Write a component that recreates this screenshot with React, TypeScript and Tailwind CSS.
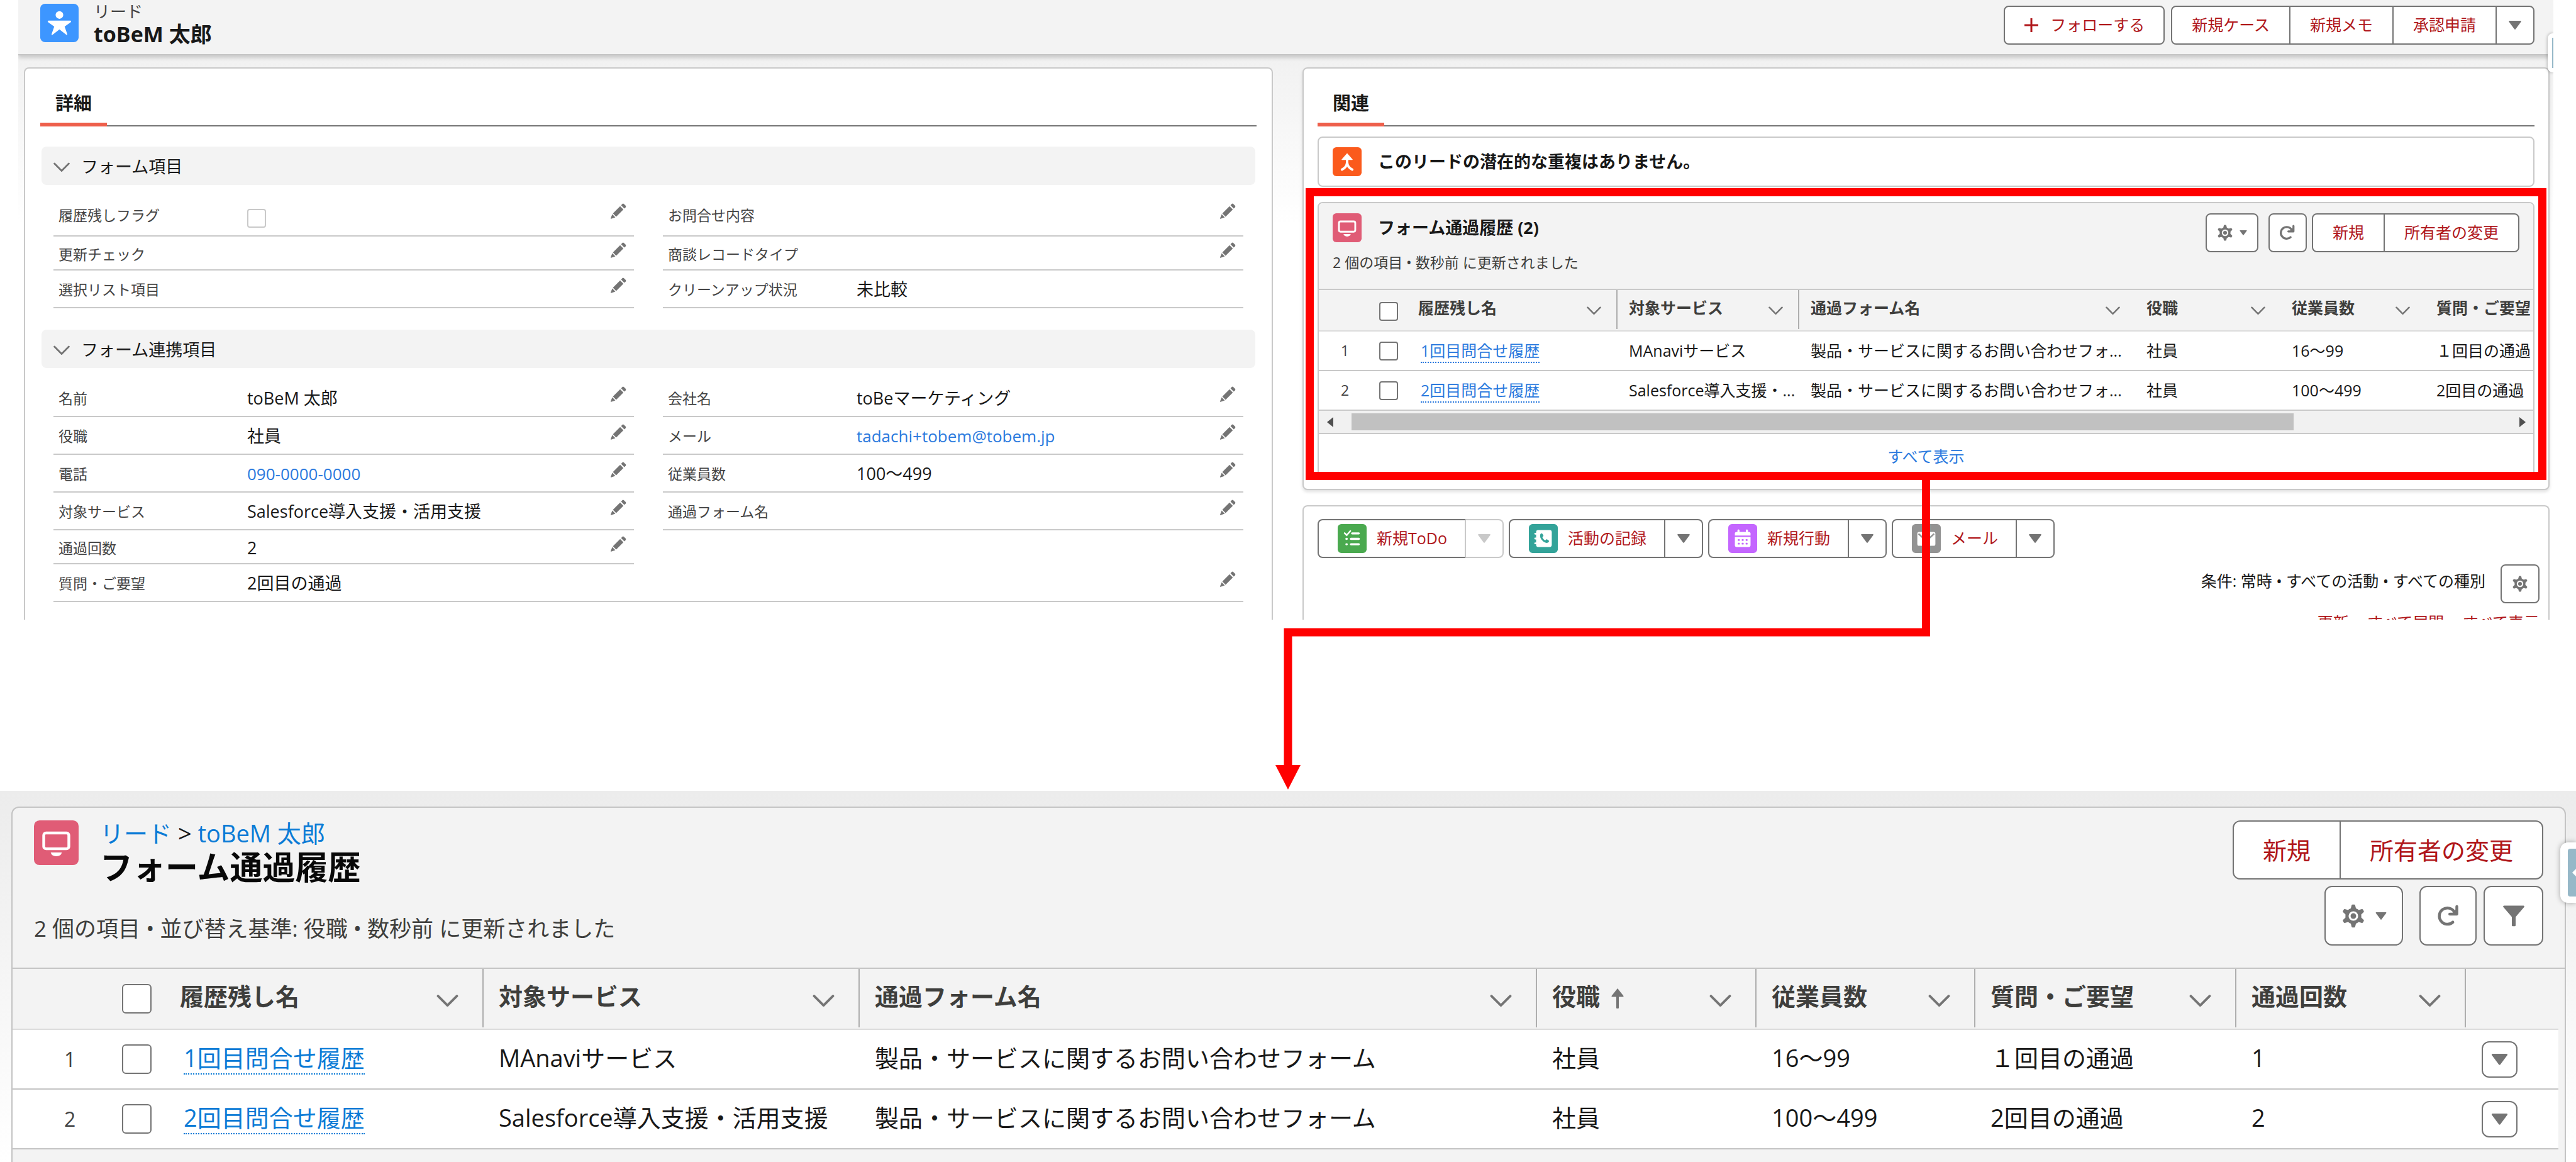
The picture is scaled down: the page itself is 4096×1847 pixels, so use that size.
import React from "react";

const GRAY = "#747474";

/* ---------- icons ---------- */

function Chevron({ className }: { className: string }) {
  return (
    <svg viewBox="0 0 24 14" className={className} fill="none" stroke={GRAY} strokeWidth="2.6" aria-hidden="true">
      <path d="M1.5 1.5 12 12 22.5 1.5" strokeLinecap="round" strokeLinejoin="round" />
    </svg>
  );
}

function Triangle({ className, color = GRAY }: { className: string; color?: string }) {
  return (
    <svg viewBox="0 0 20 14" className={className} fill={color} aria-hidden="true">
      <path d="M1.2 0h17.6q1.6.3.7 1.7L11 13.2q-1 1.2-2 0L.5 1.7Q-.4.3 1.2 0z" />
    </svg>
  );
}

function Gear({ className }: { className: string }) {
  return (
    <svg viewBox="0 0 24 24" className={className} aria-hidden="true">
      {[0, 60, 120, 180, 240, 300].map((a) => (
        <path key={a} d="M9 6 10.200 1.200q.2-.8 1-.8h1.600q.8 0 1 .8L15 6z" fill={GRAY} transform={`rotate(${a} 12 12)`} />
      ))}
      <circle cx="12" cy="12" r="6.4" fill="none" stroke={GRAY} strokeWidth="3.2" />
      <circle cx="12" cy="12" r="2.8" fill={GRAY} />
    </svg>
  );
}

function Refresh({ className }: { className: string }) {
  return (
    <svg viewBox="0 0 24 24" className={className} fill="none" stroke={GRAY} strokeWidth="3" aria-hidden="true">
      <path d="M16.8 18.5A8.600 8.600 0 1 1 18.500 7.800" strokeLinecap="round" />
      <path d="M21 2v8h-7.500" strokeLinejoin="round" strokeLinecap="round" />
      <path d="M21 4v6h-6z" fill={GRAY} stroke="none" />
    </svg>
  );
}

function Funnel({ className }: { className: string }) {
  return (
    <svg viewBox="0 0 24 24" className={className} fill={GRAY} aria-hidden="true">
      <path d="M1.600 1h20.800q1.400.4.500 1.700L14 13v9q-.1.900-1 .9h-2q-.9 0-1-.9v-9L1.100 2.700Q.2 1.400 1.600 1z" />
    </svg>
  );
}

function Pencil() {
  return (
    <svg viewBox="0 0 24 24" className="size-[26px]" fill={GRAY} aria-hidden="true">
      <path d="M4.200 15 14.800 4.400l4.800 4.800L9 19.800z" />
      <path d="m16.200 3 2-2q1-.9 2 0l2.800 2.800q.9 1 0 2l-2 2z" />
      <path d="M3.300 16.200 7.800 20.700 1.600 22.900q-1 .200-.7-.7z" />
    </svg>
  );
}

function MonitorIcon({ className }: { className: string }) {
  return (
    <svg viewBox="0 0 48 48" className={className} aria-hidden="true">
      <rect width="48" height="48" rx="6" fill="#e05c76" />
      <rect x="10.5" y="13.5" width="27" height="17" rx="2.5" fill="none" stroke="#fff" strokeWidth="3" />
      <path d="M18 34.5h12q-1 4-6 4t-6-4z" fill="#fff" />
    </svg>
  );
}

function LeadIcon({ className }: { className: string }) {
  return (
    <svg viewBox="0 0 48 48" className={className} aria-hidden="true">
      <rect width="48" height="48" rx="6" fill="#3d96ff" />
      <circle cx="24" cy="14" r="4.8" fill="#fff" />
      <path d="M10.5 21h27q2 .4.700 2L30.500 28.500l3.300 9.500q.4 1.700-1.200.8L24 32l-8.600 6.800q-1.600.900-1.200-.8l3.300-9.500L9.800 23q-1.300-1.600.7-2z" fill="#fff" />
    </svg>
  );
}

function MergeIcon({ className }: { className: string }) {
  return (
    <svg viewBox="0 0 48 48" className={className} aria-hidden="true">
      <rect width="48" height="48" rx="6" fill="#fb5a1c" />
      <path d="M24 10 33 20q.6 1-.6 1H15.600q-1.200 0-.6-1z" fill="#fff" />
      <path d="M24 18v9M15.500 37q8-3.500 8.500-12 .5 8.500 8.500 12" fill="none" stroke="#fff" strokeWidth="4" strokeLinecap="round" />
    </svg>
  );
}

function TodoIcon({ className }: { className: string }) {
  return (
    <svg viewBox="0 0 48 48" className={className} aria-hidden="true">
      <rect width="48" height="48" rx="6" fill="#4aa94f" />
      <g fill="none" stroke="#fff" strokeWidth="3.6" strokeLinecap="round">
        <path d="M24 15.500h11M22 24.500h13M22 33.500h13M14.500 24.500h.5M14.500 33.500h.5" />
        <path d="m11.500 15 3.500 3.500 6-7" strokeWidth="2.6" />
      </g>
    </svg>
  );
}

function CallIcon({ className }: { className: string }) {
  return (
    <svg viewBox="0 0 48 48" className={className} aria-hidden="true">
      <rect width="48" height="48" rx="6" fill="#33a399" />
      <rect x="12" y="10" width="26" height="28" rx="3.5" fill="#fff" />
      <path d="M10.500 16h4M10.500 24h4M10.500 32h4" stroke="#fff" strokeWidth="3" strokeLinecap="round" />
      <path d="M19 17q2-3 4 0l1.300 2.500-2 2.500q1.300 3.500 4.700 5l2.500-2 3 1.800q2 1.800-.5 3.700-3.500 2-8-1.500Q17 23 19 17z" fill="#33a399" />
    </svg>
  );
}

function EventIcon({ className }: { className: string }) {
  return (
    <svg viewBox="0 0 48 48" className={className} aria-hidden="true">
      <rect width="48" height="48" rx="6" fill="#c466ff" />
      <path d="M11 19v-3q0-3 3-3h20q3 0 3 3v3z" fill="#fff" />
      <path d="M17 10.500v5M31 10.500v5" stroke="#fff" strokeWidth="3.4" strokeLinecap="round" />
      <path d="M11 21.500h26V35q0 3-3 3H14q-3 0-3-3z" fill="#fff" />
      <g fill="#c466ff">
        {[16, 22.5, 29].map((x) => (
          <g key={x}>
            <rect x={x} y="25" width="3" height="3" rx=".6" />
            <rect x={x} y="31" width="3" height="3" rx=".6" />
          </g>
        ))}
      </g>
    </svg>
  );
}

function MailIcon({ className }: { className: string }) {
  return (
    <svg viewBox="0 0 48 48" className={className} aria-hidden="true">
      <rect width="48" height="48" rx="6" fill="#939393" />
      <rect x="9" y="13" width="30" height="23" rx="3" fill="#fff" />
      <path d="m11 16 13 12 13-12" fill="none" stroke="#939393" strokeWidth="2.6" />
    </svg>
  );
}

/* ---------- shared controls ---------- */

const redText = "text-[#b0171b]";

function Check({ label, className }: { label: string; className: string }) {
  return <input type="checkbox" aria-label={label} className={`block appearance-none bg-white border-2 ${className}`} />;
}

/* ---------- upper page ---------- */

function PageHeader() {
  const cell = "h-full px-[31px] border-r-2 border-[#747474] cursor-pointer";
  return (
    <header className="relative flex justify-between items-start h-[88px] pl-[35px] pr-[30px] bg-[#f3f3f3] border-b-2 border-[#c4c4c4] shadow-[0_4px_6px_rgba(0,0,0,0.16)]">
      <div className="flex gap-6">
        <LeadIcon className="mt-1.5 size-[61px]" />
        <div>
          <p className="text-[26px] leading-9 text-[#444]">リード</p>
          <h1 className="text-[34px] leading-9 font-bold text-[#181818]">toBeM 太郎</h1>
        </div>
      </div>
      <div className={`flex gap-[10px] pt-[9px] text-[25px] ${redText}`}>
        <button className="flex items-center gap-[18px] h-[62px] px-[30px] bg-white border-2 border-[#747474] rounded-lg">
          <svg viewBox="0 0 24 24" className="size-6" stroke="#b0171b" strokeWidth="3" aria-hidden="true">
            <path d="M12 1v22M1 12h22" />
          </svg>
          フォローする
        </button>
        <div className="flex h-[62px] bg-white border-2 border-[#747474] rounded-lg">
          <button className={cell}>新規ケース</button>
          <button className={cell}>新規メモ</button>
          <button className={cell}>承認申請</button>
          <button aria-label="その他のアクション" className="flex items-center justify-center w-[58px]">
            <Triangle className="w-5 h-3.5" />
          </button>
        </div>
      </div>
    </header>
  );
}

type Field = { label: string; value?: React.ReactNode; edit?: boolean; row: string };

function FieldRow({ label, value, edit = true, row }: Field) {
  return (
    <div className={`flex items-end border-b-2 border-[#c9c9c9] pl-2 pr-3 ${row}`}>
      <dt className="w-[300px] shrink-0 text-[23px] leading-9 text-[#444]">{label}</dt>
      <dd className="flex-1 min-h-9 text-[27px] leading-9 text-[#181818]">{value}</dd>
      {edit && (
        <button aria-label={`${label} を編集`} className="mb-[11px]">
          <Pencil />
        </button>
      )}
    </div>
  );
}

function Section({ title, children }: { title: string; children: React.ReactNode }) {
  return (
    <section className="mx-0.5">
      <h3>
        <button className="flex items-center gap-[18px] w-full h-[61px] pl-[19px] pt-1 rounded-lg bg-[#f3f3f3] text-[27px] text-[#181818]">
          <Chevron className="w-[26px] h-4" />
          {title}
        </button>
      </h3>
      <dl className="grid grid-cols-2 gap-x-[46px] px-[19px]">{children}</dl>
    </section>
  );
}

function TabBar({ name }: { name: string }) {
  return (
    <div role="tablist" className="flex h-[92px] border-b-2 border-[#747474]">
      <button role="tab" aria-selected="true" className="h-[92px] px-6 pt-6 border-b-[6px] border-[#ee5f4b] text-[29px] font-bold text-[#181818]">
        {name}
      </button>
    </div>
  );
}

const blue = "text-[#2b7ade]";
const normal = "h-[60px] pb-2.5";
const tight = "h-[54px] pb-1.5";

function DetailCard() {
  return (
    <section className="bg-white border-2 border-b-0 border-[#c9c9c9] rounded-t-lg px-6">
      <TabBar name="詳細" />
      <div className="pt-8">
        <Section title="フォーム項目">
          <FieldRow
            label="履歴残しフラグ"
            row="h-[82px] pb-3.5"
            value={<Check label="履歴残しフラグ" className="mt-2 -mb-2 size-[30px] rounded border-[#c9c9c9]" />}
          />
          <FieldRow label="お問合せ内容" row="h-[82px] pb-3.5" />
          <FieldRow label="更新チェック" row={tight} />
          <FieldRow label="商談レコードタイプ" row={tight} />
          <FieldRow label="選択リスト項目" row={normal} />
          <FieldRow label="クリーンアップ状況" value="未比較" edit={false} row={normal} />
        </Section>
      </div>
      <div className="pt-[34px] pb-7">
        <Section title="フォーム連携項目">
          <FieldRow label="名前" value="toBeM 太郎" row="h-[78px] pb-2.5" />
          <FieldRow label="会社名" value="toBeマーケティング" row="h-[78px] pb-2.5" />
          <FieldRow label="役職" value="社員" row={normal} />
          <FieldRow
            label="メール"
            value={<a href="mailto:tadachi+tobem@tobem.jp" className={`text-[26px] ${blue}`}>tadachi+tobem@tobem.jp</a>}
            row={normal}
          />
          <FieldRow label="電話" value={<a href="tel:090-0000-0000" className={`text-[26px] ${blue}`}>090-0000-0000</a>} row={normal} />
          <FieldRow label="従業員数" value="100〜499" row={normal} />
          <FieldRow label="対象サービス" value="Salesforce導入支援・活用支援" row={normal} />
          <FieldRow label="通過フォーム名" row={normal} />
          <FieldRow label="通過回数" value="2" row={tight} />
          <div />
          <div className="col-span-2">
            <FieldRow label="質問・ご要望" value="2回目の通過" row={normal} />
          </div>
        </Section>
      </div>
    </section>
  );
}

const smallHeads = ["履歴残し名", "対象サービス", "通過フォーム名", "役職", "従業員数", "質問・ご要望"];
const smallRows = [
  ["1回目問合せ履歴", "MAnaviサービス", "製品・サービスに関するお問い合わせフォ...", "社員", "16〜99", "１回目の通過"],
  ["2回目問合せ履歴", "Salesforce導入支援・...", "製品・サービスに関するお問い合わせフォ...", "社員", "100〜499", "2回目の通過"],
];

function RelatedList() {
  return (
    <div className="relative mt-6">
      <section className="border-2 border-[#c9c9c9] rounded-lg bg-white overflow-hidden">
        <div className="flex justify-between px-[22px] pt-4 h-[138px] bg-[#f3f3f3] border-b-2 border-[#c9c9c9]">
          <div>
            <div className="flex items-center gap-[26px]">
              <MonitorIcon className="size-[46px]" />
              <h3 className="text-[27px] font-bold text-[#181818]">フォーム通過履歴 (2)</h3>
            </div>
            <p className="pt-3.5 text-[23px] leading-9 text-[#3e3e3c]">2 個の項目 • 数秒前 に更新されました</p>
          </div>
          <div className={`flex items-start text-[25px] ${redText}`}>
            <button aria-label="リストビューコントロール" className="flex items-center justify-center gap-2.5 w-[84px] h-[62px] mr-4 bg-white border-2 border-[#747474] rounded-lg">
              <Gear className="size-[26px]" />
              <Triangle className="w-3 h-2" />
            </button>
            <button aria-label="更新" className="flex items-center justify-center w-[61px] h-[62px] mr-2 bg-white border-2 border-[#747474] rounded-lg">
              <Refresh className="size-[26px]" />
            </button>
            <div className="flex h-[62px] bg-white border-2 border-[#747474] rounded-lg">
              <button className="px-[31px] border-r-2 border-[#747474]">新規</button>
              <button className="px-[31px]">所有者の変更</button>
            </div>
          </div>
        </div>
        <table className="w-full table-fixed border-separate border-spacing-0 text-[25px] text-[#181818] whitespace-nowrap">
          <colgroup>
            <col className="w-[84px]" />
            <col className="w-[56px]" />
            <col className="w-[335px]" />
            <col className="w-[289px]" />
            <col className="w-[534px]" />
            <col className="w-[231px]" />
            <col className="w-[230px]" />
            <col />
          </colgroup>
          <thead>
            <tr className="bg-[#f3f3f3] text-[#3e3e3c] text-left">
              <th className="h-[66px] p-0 border-b-2 border-[#dcdcdc]" />
              <th className="p-0 pt-1 pl-3 border-b-2 border-[#dcdcdc]">
                <Check label="すべて選択" className="size-[30px] rounded border-[#747474]" />
              </th>
              {smallHeads.map((h, i) => (
                <th key={h} className="p-0 pb-0.5 border-b-2 border-[#dcdcdc]">
                  <div className={`flex items-center justify-between h-[62px] pl-[18px] ${i < 2 ? "border-r-2 border-[#aeaeae]" : ""}`}>
                    <span className="pb-1">{h}</span>
                    {i < 5 && <Chevron className="w-[23px] h-[14px] mt-1 mr-6" />}
                  </div>
                </th>
              ))}
            </tr>
          </thead>
          <tbody>
            {smallRows.map((r, n) => (
              <tr key={r[0]}>
                <td className="h-[63px] p-0 pl-[35px] border-b-2 border-[#c9c9c9] text-[23px] text-[#444]">{n + 1}</td>
                <td className="p-0 pl-3 border-b-2 border-[#c9c9c9]">
                  <Check label={`${n + 1} 行目を選択`} className="size-[30px] rounded border-[#747474]" />
                </td>
                {r.map((c, i) => (
                  <td key={i} className="p-0 pl-[18px] border-b-2 border-[#c9c9c9]">
                    {i === 0 ? (
                      <a href="#" className={`ml-1 inline-block leading-9 border-b-2 border-dotted border-[#2b7ade] ${blue}`}>
                        {c}
                      </a>
                    ) : (
                      c
                    )}
                  </td>
                ))}
              </tr>
            ))}
          </tbody>
        </table>
        <div className="flex items-center h-[37px] bg-[#f1f1f1] border-b-2 border-[#c9c9c9]">
          <button aria-label="左へスクロール" className="flex justify-center w-[52px] shrink-0 pr-4">
            <svg viewBox="0 0 10 16" className="w-2.5 h-4" fill="#505050" aria-hidden="true">
              <path d="M10 0v16L0 8z" />
            </svg>
          </button>
          <div className="flex-1">
            <div className="w-[81%] h-[27px] bg-[#c1c1c1]" />
          </div>
          <button aria-label="右へスクロール" className="flex justify-end w-[30px] shrink-0 pr-3">
            <svg viewBox="0 0 10 16" className="w-2.5 h-4" fill="#505050" aria-hidden="true">
              <path d="M0 0v16l10-8z" />
            </svg>
          </button>
        </div>
        <a href="#" className={`block h-[71px] leading-[71px] text-center text-[25px] ${blue}`}>
          すべて表示
        </a>
      </section>
      <div className="absolute -inset-x-[19px] -top-[22px] bottom-0 border-[13px] border-[#ff0000] pointer-events-none" />
    </div>
  );
}

function SplitButton({ icon, text, disabled }: { icon: React.ReactNode; text: string; disabled?: boolean }) {
  return (
    <div className="flex h-[62px]">
      <button
        className={`flex items-center gap-4 pl-[30px] pr-7 bg-white border-2 border-[#747474] rounded-l-lg ${disabled ? "border-r-[#c9c9c9]" : ""}`}
      >
        {icon}
        {text}
      </button>
      <button
        aria-label={`${text} のその他オプション`}
        disabled={disabled}
        className={`flex items-center justify-center w-[60px] bg-white border-2 border-l-0 rounded-r-lg ${disabled ? "border-[#c9c9c9]" : "border-[#747474]"}`}
      >
        <Triangle className="w-5 h-3.5" color={disabled ? "#c9c9c9" : GRAY} />
      </button>
    </div>
  );
}

function RightColumn() {
  return (
    <div className="flex flex-col">
      <section className="bg-white border-2 border-[#c9c9c9] rounded-lg px-[22px] pb-3.5 shadow-[0_3px_5px_rgba(0,0,0,0.12)]">
        <TabBar name="関連" />
        <div className="flex items-center gap-[26px] h-20 mt-4 px-[22px] border-2 border-[#c9c9c9] rounded-lg">
          <MergeIcon className="size-[46px]" />
          <h3 className="text-[27px] font-bold text-[#181818]">このリードの潜在的な重複はありません。</h3>
        </div>
        <RelatedList />
      </section>
      <section className="flex-1 mt-6 bg-white border-2 border-b-0 border-[#c9c9c9] rounded-t-lg pt-5 pl-[22px] pr-3.5 text-[25px]">
        <div className={`flex gap-2 ${redText}`}>
          <SplitButton icon={<TodoIcon className="size-[46px]" />} text="新規ToDo" disabled />
          <SplitButton icon={<CallIcon className="size-[46px]" />} text="活動の記録" />
          <SplitButton icon={<EventIcon className="size-[46px]" />} text="新規行動" />
          <SplitButton icon={<MailIcon className="size-[46px]" />} text="メール" />
        </div>
        <div className="flex justify-end items-center gap-6 pt-[10px] text-[#181818]">
          <p className="pb-2">条件: 常時 • すべての活動 • すべての種別</p>
          <button aria-label="タイムライン設定" className="flex items-center justify-center w-[62px] h-[62px] bg-white border-2 border-[#747474] rounded-lg">
            <Gear className="size-[26px]" />
          </button>
        </div>
        <div className={`flex justify-end items-start gap-2.5 h-[10px] mt-4 overflow-hidden leading-7 ${redText}`}>
          <a href="#">更新</a>
          <span>•</span>
          <a href="#">すべて展開</a>
          <span>•</span>
          <a href="#">すべて表示</a>
        </div>
      </section>
    </div>
  );
}

/* ---------- lower page ---------- */

const bigHeads = ["履歴残し名", "対象サービス", "通過フォーム名", "役職", "従業員数", "質問・ご要望", "通過回数"];
const bigRows = [
  ["1回目問合せ履歴", "MAnaviサービス", "製品・サービスに関するお問い合わせフォーム", "社員", "16〜99", "１回目の通過", "1"],
  ["2回目問合せ履歴", "Salesforce導入支援・活用支援", "製品・サービスに関するお問い合わせフォーム", "社員", "100〜499", "2回目の通過", "2"],
];

function ListPage() {
  const btn = "flex items-center justify-center h-[95px] bg-white border-2 border-[#747474] rounded-xl";
  return (
    <section className="relative flex-1 flex flex-col mt-[272px] pt-[25px] pl-[18px] pr-4 bg-linear-to-b from-[#ececec] to-white">
      <div className="flex-1 bg-[#f3f3f3] border-2 border-b-0 border-[#c4c4c4] rounded-t-xl">
        <div className="flex justify-between h-64 pt-5 pl-[34px] pr-[34px] border-b-2 border-[#c4c4c4]">
          <div>
            <div className="flex gap-[34px]">
              <MonitorIcon className="size-[71px]" />
              <div>
                <nav className="text-[38px] leading-10 text-[#181818]">
                  <a href="#" className="text-[#0b7bd6]">リード</a> &gt; <a href="#" className="text-[#0b7bd6]">toBeM 太郎</a>
                </nav>
                <h2 className="text-[52px] leading-[68px] font-bold text-[#080808]">フォーム通過履歴</h2>
              </div>
            </div>
            <p className="pt-9 text-[35px] leading-[56px] text-[#3e3e3c]">2 個の項目 • 並び替え基準: 役職 • 数秒前 に更新されました</p>
          </div>
          <div className={`flex flex-col items-end gap-2.5 text-[38px] ${redText}`}>
            <div className="flex h-[94px] bg-white border-2 border-[#747474] rounded-xl">
              <button className="px-[46px] border-r-2 border-[#747474]">新規</button>
              <button className="px-[46px]">所有者の変更</button>
            </div>
            <div className="flex">
              <button aria-label="リストビューコントロール" className={`${btn} gap-4 w-[125px] mr-[26px]`}>
                <Gear className="size-[38px]" />
                <Triangle className="w-[18px] h-3" />
              </button>
              <button aria-label="更新" className={`${btn} w-[91px] mr-[11px]`}>
                <Refresh className="size-9" />
              </button>
              <button aria-label="絞り込み" className={`${btn} w-[95px]`}>
                <Funnel className="size-9" />
              </button>
            </div>
          </div>
        </div>
        <div className="pr-2.5">
          <table className="w-full table-fixed border-separate border-spacing-0 text-[38px] text-[#181818] whitespace-nowrap">
            <colgroup>
              <col className="w-[160px]" />
              <col className="w-[82px]" />
              <col className="w-[507px]" />
              <col className="w-[598px]" />
              <col />
              <col className="w-[349px]" />
              <col className="w-[348px]" />
              <col className="w-[415px]" />
              <col className="w-[365px]" />
              <col className="w-[147px]" />
            </colgroup>
            <thead>
              <tr className="text-[#3e3e3c] text-left">
                <th className="h-[97px] p-0 border-b-2 border-[#dcdcdc]" />
                <th className="p-0 pl-[14px] border-b-2 border-[#dcdcdc]">
                  <Check label="すべて選択" className="size-[47px] rounded-md border-[#747474]" />
                </th>
                {bigHeads.map((h, i) => (
                  <th key={h} className="p-0 pb-0.5 border-b-2 border-[#dcdcdc]">
                    <div className="flex items-center h-[93px] pl-6 pr-[38px] border-r-2 border-[#aeaeae]">
                      <span className="pb-1.5">{h}</span>
                      {h === "役職" && (
                        <svg viewBox="0 0 20 32" className="w-5 h-8 ml-[18px]" fill={GRAY} aria-label="昇順">
                          <path d="M10 0 19.5 12q.5 1.500-1.200 1.500H12V31q0 1-1 1H9q-1 0-1-1V13.500H1.700Q0 13.500.5 12z" />
                        </svg>
                      )}
                      <Chevron className="w-[35px] h-5 mt-2 ml-auto" />
                    </div>
                  </th>
                ))}
                <th className="p-0 border-b-2 border-[#dcdcdc]" />
              </tr>
            </thead>
            <tbody className="bg-white">
              {bigRows.map((r, n) => (
                <tr key={r[0]}>
                  <td className="h-[95px] p-0 pl-[82px] border-b-2 border-[#c4c4c4] text-[32px] text-[#444]">{n + 1}</td>
                  <td className="p-0 pl-[14px] border-b-2 border-[#c4c4c4]">
                    <Check label={`${n + 1} 行目を選択`} className="size-[47px] rounded-md border-[#747474]" />
                  </td>
                  {r.map((c, i) => (
                    <td key={i} className="p-0 pb-1 pl-6 border-b-2 border-[#c4c4c4]">
                      {i === 0 ? (
                        <a href="#" className="ml-1.5 inline-block leading-[50px] border-b-2 border-dotted border-[#0b7bd6] text-[#0b7bd6]">
                          {c}
                        </a>
                      ) : (
                        c
                      )}
                    </td>
                  ))}
                  <td className="p-0 pl-[25px] border-b-2 border-[#c4c4c4]">
                    <button aria-label={`${n + 1} 行目のアクション`} className="flex items-center justify-center w-[57px] h-[58px] bg-white border-2 border-[#747474] rounded-xl">
                      <Triangle className="w-[27px] h-[18px]" />
                    </button>
                  </td>
                </tr>
              ))}
            </tbody>
          </table>
        </div>
      </div>
      <div className="absolute right-0 top-[82px] flex items-center w-[25px] h-[96px] pl-3 bg-white rounded-l-xl shadow-[0_0_8px_rgba(0,0,0,0.35)]">
        <div className="flex items-center justify-end w-full h-[76px] bg-[#96b8c8] rounded-l-sm">
          <svg viewBox="0 0 6 12" className="w-1.5 h-3" fill="#fff" aria-hidden="true">
            <path d="M6 0v12L0 6z" />
          </svg>
        </div>
      </div>
    </section>
  );
}

export default function App() {
  return (
    <div className="relative flex flex-col min-h-screen overflow-hidden bg-white font-['Open_Sans','Noto_Sans_CJK_JP',sans-serif]">
      <div className="relative ml-[29px] mr-9 overflow-hidden">
        <PageHeader />
        <main className="grid grid-cols-[1986fr_1983fr] gap-[47px] pt-[19px] pl-[9px] pr-1.5 bg-[linear-gradient(to_bottom,#f1f1f1,#ffffff_270px)]">
          <DetailCard />
          <RightColumn />
        </main>
        <div className="absolute right-0 top-[53px] flex items-center w-[9px] h-[62px] pl-[7px] bg-white rounded-l-lg shadow-[0_0_5px_rgba(0,0,0,0.35)]">
          <div className="w-0.5 h-12 bg-[#96b8c8]" />
        </div>
      </div>
      <ListPage />
      <svg viewBox="0 0 1042 495" className="absolute left-1/2 top-[760px] -ml-[21px] w-[1042px] h-[495px] pointer-events-none" aria-hidden="true">
        <path d="M1035.500 0V245H21V460" fill="none" stroke="#ff0000" strokeWidth="13" />
        <path d="M1 456H41L21 495z" fill="#ff0000" />
      </svg>
    </div>
  );
}
